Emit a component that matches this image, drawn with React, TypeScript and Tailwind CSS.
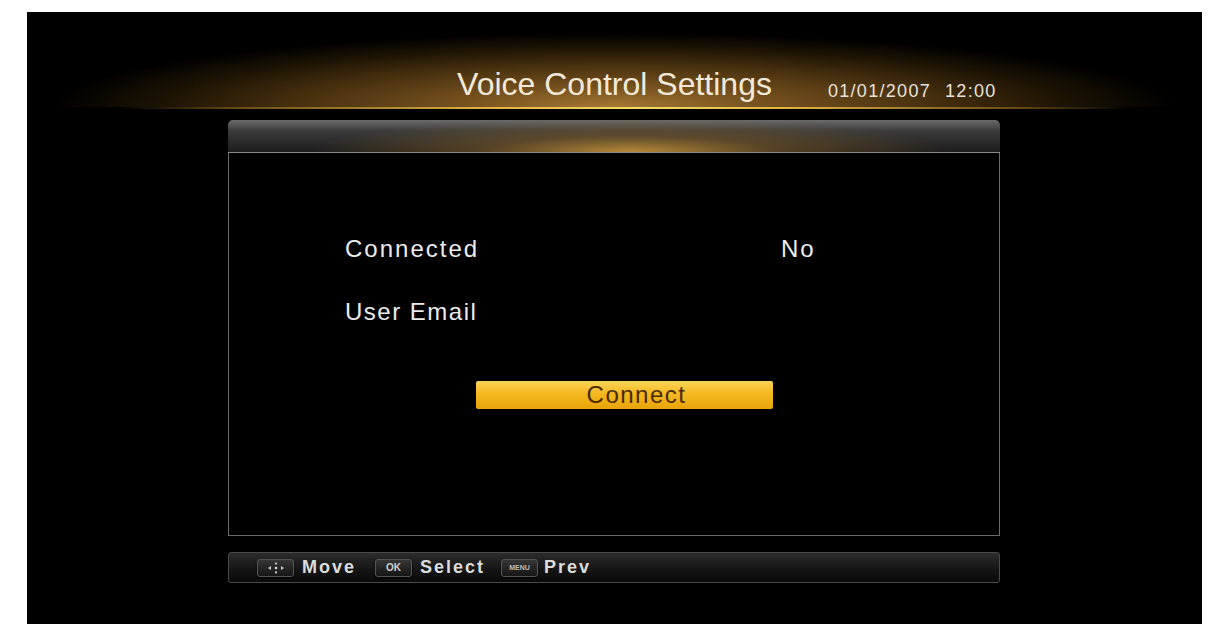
import React from 'react'

const font = { fontFamily: '"Liberation Sans", Arial, sans-serif' }

function KeyIcon({ children }: { children: React.ReactNode }) {
  return (
    <div className="w-[37px] h-[18px] rounded-[3px] border border-[#555] bg-[linear-gradient(#363636,#161616)] flex items-center justify-center shadow-[0_1px_2px_rgba(0,0,0,0.8)]">
      {children}
    </div>
  )
}

function MoveIcon() {
  return (
    <svg width="22" height="12" viewBox="0 0 22 12">
      <circle cx="11" cy="6" r="1.3" fill="#ddd" />
      <path d="M3 6 L6 4 L6 8 Z" fill="#ccc" />
      <path d="M19 6 L16 4 L16 8 Z" fill="#ccc" />
      <circle cx="11" cy="1.6" r="1.1" fill="#ccc" />
      <circle cx="11" cy="10.4" r="1.1" fill="#ccc" />
    </svg>
  )
}

export default function App() {
  return (
    <div className="w-[1220px] h-[644px] bg-white pt-[12px] pl-[27px]" style={font}>
      <div className="w-[1175px] h-[612px] bg-black flex flex-col">
        {/* title band */}
        <div className="h-[95px] grid grid-cols-[1fr_auto_1fr] items-end bg-[radial-gradient(ellipse_560px_74px_at_50%_100%,#a47834_0%,#7a5420_25%,#4a3210_55%,#1e1404_80%,transparent_100%)]">
          <div />
          <div className="text-[32px] leading-[36px] pb-[5px] text-[#f2e9d8] whitespace-nowrap">
            Voice Control Settings
          </div>
          <div className="pl-[56px] pb-[5px] text-[18px] leading-[22px] tracking-[1.3px] text-[#e8e2d8] whitespace-nowrap flex gap-[14px]">
            <span>01/01/2007</span>
            <span>12:00</span>
          </div>
        </div>
        <div className="h-[2px] bg-[linear-gradient(90deg,transparent_8%,#6a4c18_18%,#d8b040_38%,#f6dc60_52%,#d8b040_66%,#6a4c18_84%,transparent_94%)]" />

        {/* main panel */}
        <div className="ml-[201px] mt-[11px] w-[772px] h-[416px] flex flex-col">
          <div className="h-[33px] rounded-t-[5px] border-b border-[#8a8a8a] bg-[radial-gradient(ellipse_320px_34px_at_52%_100%,rgba(200,150,60,0.9)_0%,rgba(140,100,40,0.5)_45%,transparent_100%),linear-gradient(#6a6a6a,#3a3a3a_35%,#1c1c1c)]" />
          <div className="flex-1 border border-t-0 border-[#6a6a6a] bg-black pt-[80px] flex flex-col">
            <div className="h-[32px] flex items-center pl-[116px] text-[24px] tracking-[2px] text-[#ececec]">
              <span className="w-[436px]">Connected</span>
              <span>No</span>
            </div>
            <div className="h-[32px] mt-[31px] flex items-center pl-[116px] text-[24px] tracking-[1.5px] text-[#ececec]">
              <span>User Email</span>
            </div>
            <div className="ml-[247px] mt-[53px] w-[297px] h-[28px] pl-[24px] rounded-[2px] bg-[linear-gradient(#fbd45a,#f5b820_45%,#e8a408)] flex items-center justify-center text-[24px] tracking-[1.5px] text-[#4a2a04]">
              Connect
            </div>
          </div>
        </div>

        {/* footer */}
        <div className="ml-[201px] mt-[16px] w-[772px] h-[31px] rounded-[3px] border border-[#4a4a4a] bg-[linear-gradient(#2c2c2c,#141414_60%,#0a0a0a)] flex items-center pl-[28px] text-[18px] font-bold tracking-[2px] text-[#dcdcdc]">
          <KeyIcon>
            <MoveIcon />
          </KeyIcon>
          <span className="ml-[8px]">Move</span>
          <div className="ml-[19px]">
            <KeyIcon>
              <span className="text-[10px] leading-none tracking-normal text-[#cfcfcf]">OK</span>
            </KeyIcon>
          </div>
          <span className="ml-[8px]">Select</span>
          <div className="ml-[16px]">
            <KeyIcon>
              <span className="text-[7px] leading-none tracking-normal text-[#bdbdbd]">MENU</span>
            </KeyIcon>
          </div>
          <span className="ml-[6px]">Prev</span>
        </div>
      </div>
    </div>
  )
}
